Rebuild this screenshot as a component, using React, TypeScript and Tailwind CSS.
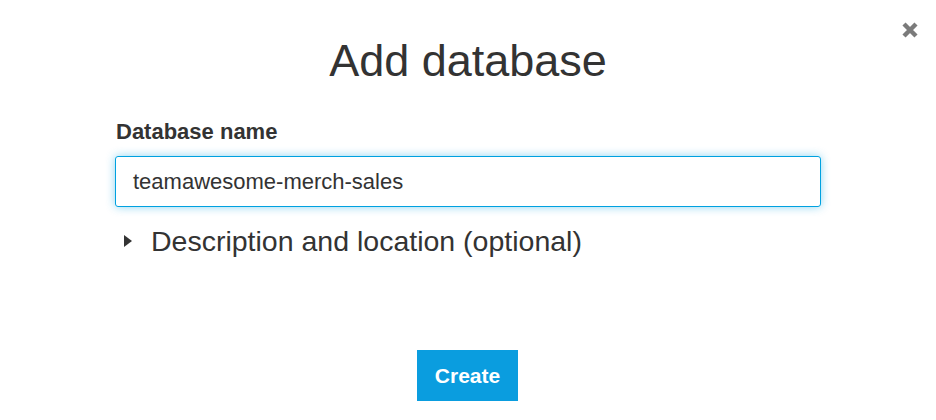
export default function App() {
  return (
    <div className="relative w-[936px] h-[420px] bg-white text-[#333333] font-['Liberation_Sans',Arial,sans-serif] overflow-hidden">
      <button className="absolute left-[901px] top-[21px] w-[18px] h-[18px] flex items-center justify-center">
        <svg width="18" height="18" viewBox="0 0 18 18">
          <path d="M3 3 L15 15 M15 3 L3 15" stroke="#7b7b7b" strokeWidth="4.4" strokeLinecap="butt" />
        </svg>
      </button>
      <div className="flex flex-col pt-[35px]">
        <h1 className="text-center text-[45px] leading-[52px] font-normal">Add database</h1>
        <div className="px-[115px] mt-[33px] flex flex-col">
          <label className="text-[22px] leading-[24px] font-bold pl-[1px]">Database name</label>
          <div className="mt-[12px] h-[51px] border border-[#00a1e0] rounded-[3px] shadow-[0_0_10px_rgba(0,161,224,0.45)] flex items-center pl-[17px] text-[22px]">
            teamawesome-merch-sales
          </div>
          <div className="mt-[18px] flex items-center h-[32px]">
            <svg width="8" height="12" viewBox="0 0 8 12" className="ml-[9px]">
              <path d="M0 0 L8 6 L0 12 Z" fill="#333333" />
            </svg>
            <span className="ml-[19px] text-[28.5px] leading-[32px]">Description and location (optional)</span>
          </div>
          <div className="mt-[93px] flex justify-center">
            <button className="w-[101px] h-[51px] bg-[#0a9ddf] text-white font-bold text-[21px] ml-[-1px]">Create</button>
          </div>
        </div>
      </div>
    </div>
  );
}
